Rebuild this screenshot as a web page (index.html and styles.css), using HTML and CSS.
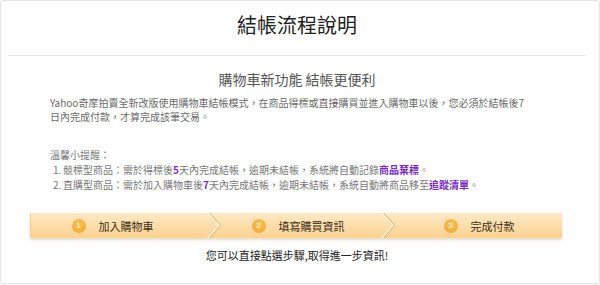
FILE: index.html
```html
<!DOCTYPE html>
<html lang="zh-Hant">
<head>
<meta charset="utf-8">
<title>結帳流程說明</title>
<link rel="stylesheet" href="styles.css">
</head>
<body>
<div class="card">
  <div class="header">
    <h1 class="title">結帳流程說明</h1>
  </div>
  <h2 class="subtitle">購物車新功能 結帳更便利</h2>
  <p class="intro">Yahoo奇摩拍賣全新改版使用購物車結帳模式，在商品得標或直接購買並進入購物車以後，您必須於結帳後7<br>日內完成付款，才算完成該筆交易。</p>
  <div class="tips">
    <div class="tips-head">溫馨小提醒：</div>
    <div class="tip"><span class="num">1.</span><span>競標型商品：需於得標後<b class="hl">5</b>天內完成結帳，逾期未結帳，系統將自動記錄<b class="hl">商品棄標</b>。</span></div>
    <div class="tip"><span class="num">2.</span><span>直購型商品：需於加入購物車後<b class="hl">7</b>天內完成結帳，逾期未結帳，系統自動將商品移至<b class="hl">追蹤清單</b>。</span></div>
  </div>
  <div class="steps">
    <div class="step step-1"><span class="circle">1</span><span class="label">加入購物車</span></div>
    <svg class="chev" width="16" height="25" viewBox="0 0 16 25"><polyline points="1,-1 13,12.5 1,26" fill="none" stroke="#fff7e8" stroke-width="1.3"/><polyline points="2.6,-1 14.6,12.5 2.6,26" fill="none" stroke="#e6ad62" stroke-width="1"/></svg>
    <div class="step step-2"><span class="circle">2</span><span class="label">填寫購買資訊</span></div>
    <svg class="chev" width="16" height="25" viewBox="0 0 16 25"><polyline points="1,-1 13,12.5 1,26" fill="none" stroke="#fff7e8" stroke-width="1.3"/><polyline points="2.6,-1 14.6,12.5 2.6,26" fill="none" stroke="#e6ad62" stroke-width="1"/></svg>
    <div class="step step-3"><span class="circle">3</span><span class="label">完成付款</span></div>
  </div>
  <p class="hint">您可以直接點選步驟,取得進一步資訊!</p>
</div>
</body>
</html>
```
FILE: styles.css
```css
html, body {
  margin: 0;
  padding: 0;
  background: #ffffff;
}
body {
  font-family: "Noto Sans CJK TC", "Liberation Sans", sans-serif;
  width: 600px;
  height: 285px;
  overflow: hidden;
}
.card {
  width: 578px;
  height: 264px;
  padding: 0 13px 18px 7px;
  border: 1px solid #e4e4e4;
  border-radius: 3px;
  box-shadow: 0 1px 2px rgba(0,0,0,0.05);
  background: #fff;
}
.header {
  height: 55px;
  border-bottom: 1px solid #e6e6e6;
  display: flex;
  align-items: center;
  justify-content: center;
  box-sizing: border-box;
}
.title {
  margin: 0 0 6px 0;
  font-size: 20px;
  line-height: 26px;
  font-weight: normal;
  color: #222;
}
.subtitle {
  margin: 13px 0 0 0;
  text-align: center;
  font-size: 14px;
  line-height: 20px;
  font-weight: normal;
  color: #555;
}
.intro {
  margin: 7px 0 0 42px;
  font-size: 10px;
  line-height: 14px;
  color: #6a6a6a;
  white-space: nowrap;
}
.tips {
  margin: 23px 0 0 42px;
  font-size: 10px;
  line-height: 15px;
  color: #777;
}
.tip {
  display: flex;
  padding-left: 3px;
}
.num {
  width: 10px;
  flex: none;
}
.hl {
  color: #7a2bc4;
  font-weight: bold;
}
.steps {
  margin: 21px 0 0 22px;
  width: 532px;
  height: 25px;
  display: flex;
  background: linear-gradient(#fde9c6, #fbd28e);
  box-shadow: 0 2px 3px rgba(150,110,40,0.25);
  border-left: 1px solid #f5cf8c;
  box-sizing: border-box;
  border-radius: 1px;
}
.step {
  display: flex;
  align-items: center;
  justify-content: center;
  gap: 13px;
}
.step-1 {
  flex: 0 0 175px;
  padding-right: 12px;
  box-sizing: border-box;
}
.step-2 {
  flex: 0 0 158px;
  padding-right: 6px;
  box-sizing: border-box;
}
.step-3 {
  flex: 1;
}
.chev {
  flex: none;
  display: block;
}
.circle {
  width: 14px;
  height: 14px;
  border-radius: 50%;
  background: radial-gradient(circle at 50% 35%, #f9c45a, #eea42a);
  color: #fff;
  font-family: "Liberation Sans", sans-serif;
  font-size: 8px;
  line-height: 14px;
  text-align: center;
  flex: none;
}
.label {
  font-size: 11px;
  line-height: 14px;
  color: #3d2f18;
}
.hint {
  margin: 9px 0 0 0;
  text-align: center;
  font-size: 11px;
  line-height: 16px;
  color: #222;
}
```
